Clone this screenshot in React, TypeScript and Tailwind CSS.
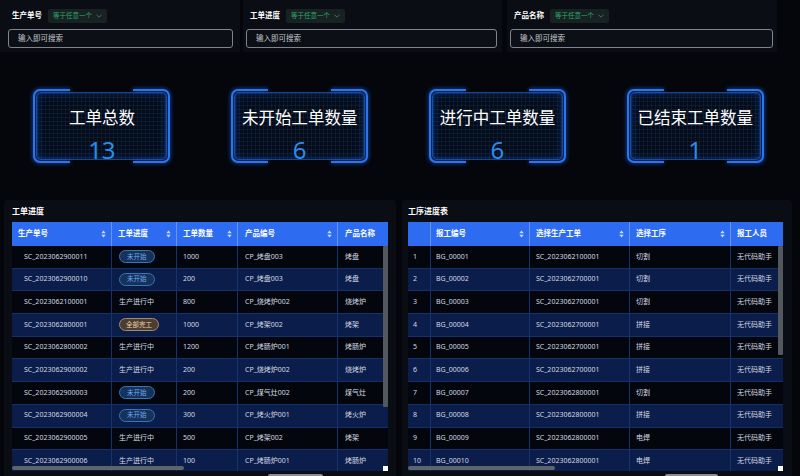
import React from 'react';

const FONT = "font-['Noto_Sans','Noto_Sans_CJK_SC',sans-serif]";

function SortIcon() {
  return (
    <svg width="5" height="8" viewBox="0 0 5 8" className="shrink-0">
      <polygon points="0.3,3.3 2.5,0.6 4.7,3.3" fill="#cfdcff" />
      <polygon points="0.3,4.7 2.5,7.4 4.7,4.7" fill="#cfdcff" />
    </svg>
  );
}

function FilterPanel({ label, cls }: { label: string; cls: string }) {
  return (
    <div className={`flex h-[52px] flex-col bg-[#0a0d13] pt-[9px] ${cls}`}>
      <div className="flex h-[14px] items-center">
        <span className="pl-[4px] text-[7.5px] font-bold leading-none text-white">{label}</span>
        <span className="ml-[6px] flex h-[14px] items-center gap-[4px] rounded-[2px] bg-[#182222] px-[5px] text-[6.5px] leading-none text-[#2aa86a]">
          等于任意一个
          <svg width="6" height="4" viewBox="0 0 6 4">
            <polyline points="0.5,0.8 3,3.2 5.5,0.8" fill="none" stroke="#5b7a6c" strokeWidth="0.8" />
          </svg>
        </span>
      </div>
      <div className="mt-[6px] flex h-[19px] items-center rounded-[3px] border border-[#80858d] bg-[#0c0f15] pl-[9px] text-[7.5px] text-[#c4c8ce]">
        输入即可搜索
      </div>
    </div>
  );
}

function StatCard({ title, value }: { title: string; value: string }) {
  return (
    <div className="relative h-[74px] w-[137px] p-[3px]">
      <div className="flex h-full flex-col items-center rounded-[5px] border border-[#1a4690] bg-[#040c1a] bg-[linear-gradient(rgba(70,130,210,0.1)_1px,transparent_1px),linear-gradient(90deg,rgba(70,130,210,0.1)_1px,transparent_1px)] bg-[length:4px_4px] pt-[15px] shadow-[inset_0_0_8px_rgba(30,100,230,0.35)]">
        <div className="text-[16.5px] leading-[20px] text-white">{title}</div>
        <div className="mt-[10px] text-[24px] font-normal leading-[24px] text-[#2a8de8]">{value}</div>
      </div>
      <div className="absolute bottom-0 left-0 top-0 w-[37px] rounded-l-[7px] border-y-2 border-l-2 border-[#2d74ee] drop-shadow-[0_0_2px_#1e6bff]" />
      <div className="absolute bottom-0 right-0 top-0 w-[37px] rounded-r-[7px] border-y-2 border-r-2 border-[#2d74ee] drop-shadow-[0_0_2px_#1e6bff]" />
    </div>
  );
}

type Col = { title: string; cls: string; sort: boolean; body: string };

function Badge({ text }: { text: string }) {
  if (text === '未开始') {
    return (
      <span className="flex h-[13px] items-center rounded-full border border-[#3a73b6] bg-[#15325a] px-[7px] text-[6.5px] leading-none text-[#6ea8ea]">
        未开始
      </span>
    );
  }
  if (text === '全部完工') {
    return (
      <span className="flex h-[13px] items-center rounded-full border border-[#a88b65] bg-[#4a3e33] px-[6px] text-[6.5px] leading-none text-[#ead1a6]">
        全部完工
      </span>
    );
  }
  return <span>{text}</span>;
}

function DataTable({
  cols,
  rows,
  widthCls,
  vThumbCls,
  hThumbCls,
}: {
  cols: Col[];
  rows: string[][];
  widthCls: string;
  vThumbCls: string;
  hThumbCls: string;
}) {
  return (
    <div className={`relative h-[249px] overflow-hidden ${widthCls}`}>
      <div className="flex h-[24px] bg-[#2d6cf0]">
        {cols.map((c, i) => (
          <div
            key={i}
            className={`flex shrink-0 items-center justify-between border-r border-[rgba(255,255,255,0.28)] pr-[5px] text-[7.5px] font-bold text-white ${c.cls}`}
          >
            <span>{c.title}</span>
            {c.sort && <SortIcon />}
          </div>
        ))}
      </div>
      <div className="flex flex-col">
        {rows.map((r, ri) => (
          <div
            key={ri}
            className={`flex h-[22.7px] shrink-0 border-b border-[#152f68] ${ri % 2 === 0 ? 'bg-[#03060c]' : 'bg-[#0b1d4a]'}`}
          >
            {r.map((v, ci) => (
              <div
                key={ci}
                className={`flex shrink-0 items-center border-r border-[#17336f] text-[7px] text-[#d3d9e3] ${cols[ci].cls} ${cols[ci].body}`}
              >
                <Badge text={v} />
              </div>
            ))}
          </div>
        ))}
      </div>
      <div className={`absolute top-[24px] w-[5px] rounded-[1px] bg-[#53575e] ${vThumbCls}`} />
      <div className={`absolute left-0 top-[244px] h-[4px] rounded-[2px] bg-[#5f636a] ${hThumbCls}`} />
    </div>
  );
}

const leftCols: Col[] = [
  { title: '生产单号', cls: 'w-[100px] pl-[6px]', sort: true, body: 'pl-[12px]' },
  { title: '工单进度', cls: 'w-[65px] pl-[6px]', sort: true, body: 'pl-[7px]' },
  { title: '工单数量', cls: 'w-[61px] pl-[6px]', sort: true, body: 'pl-[6px]' },
  { title: '产品编号', cls: 'w-[100px] pl-[7px]', sort: true, body: 'pl-[7px]' },
  { title: '产品名称', cls: 'w-[80px] pl-[7px]', sort: true, body: 'pl-[7px]' },
];

const leftRows = [
  ['SC_2023062900011', '未开始', '1000', 'CP_烤盘003', '烤盘'],
  ['SC_2023062900010', '未开始', '200', 'CP_烤盘003', '烤盘'],
  ['SC_2023062100001', '生产进行中', '800', 'CP_烧烤炉002', '烧烤炉'],
  ['SC_2023062800001', '全部完工', '1000', 'CP_烤架002', '烤架'],
  ['SC_2023062800002', '生产进行中', '1200', 'CP_烤肠炉001', '烤肠炉'],
  ['SC_2023062900002', '生产进行中', '200', 'CP_烧烤炉002', '烧烤炉'],
  ['SC_2023062900003', '未开始', '200', 'CP_煤气灶002', '煤气灶'],
  ['SC_2023062900004', '未开始', '300', 'CP_烤火炉001', '烤火炉'],
  ['SC_2023062900005', '生产进行中', '500', 'CP_烤架002', '烤架'],
  ['SC_2023062900006', '生产进行中', '100', 'CP_烤肠炉001', '烤肠炉'],
];

const rightCols: Col[] = [
  { title: '', cls: 'w-[23px] pl-[5px]', sort: false, body: 'pl-[5px]' },
  { title: '报工编号', cls: 'w-[99px] pl-[5px]', sort: true, body: 'pl-[5px]' },
  { title: '选择生产工单', cls: 'w-[100px] pl-[6px]', sort: true, body: 'pl-[6px]' },
  { title: '选择工序', cls: 'w-[101px] pl-[6px]', sort: true, body: 'pl-[6px]' },
  { title: '报工人员', cls: 'w-[80px] pl-[6px]', sort: true, body: 'pl-[6px]' },
];

const rightRows = [
  ['1', 'BG_00001', 'SC_2023062100001', '切割', '无代码助手'],
  ['2', 'BG_00002', 'SC_2023062700001', '切割', '无代码助手'],
  ['3', 'BG_00003', 'SC_2023062700001', '切割', '无代码助手'],
  ['4', 'BG_00004', 'SC_2023062700001', '拼接', '无代码助手'],
  ['5', 'BG_00005', 'SC_2023062700001', '拼接', '无代码助手'],
  ['6', 'BG_00006', 'SC_2023062700001', '拼接', '无代码助手'],
  ['7', 'BG_00007', 'SC_2023062800001', '切割', '无代码助手'],
  ['8', 'BG_00008', 'SC_2023062800001', '拼接', '无代码助手'],
  ['9', 'BG_00009', 'SC_2023062800001', '电焊', '无代码助手'],
  ['10', 'BG_00010', 'SC_2023062800001', '电焊', '无代码助手'],
];

export default function App() {
  return (
    <div className={`h-[476px] w-[800px] overflow-hidden bg-[#04060b] ${FONT}`}>
      <div className="flex">
        <FilterPanel label="生产单号" cls="w-[240px] pl-[8px] pr-[7px]" />
        <FilterPanel label="工单进度" cls="ml-[3px] w-[259px] pl-[3px] pr-[5px]" />
        <FilterPanel label="产品名称" cls="ml-[5px] w-[270px] pl-[3px] pr-[4px]" />
      </div>

      <div className="mt-[37px] grid grid-cols-4 justify-items-center pl-[3px] pr-[6px]">
        <StatCard title="工单总数" value="13" />
        <StatCard title="未开始工单数量" value="6" />
        <StatCard title="进行中工单数量" value="6" />
        <StatCard title="已结束工单数量" value="1" />
      </div>

      <div className="mt-[37px] flex">
        <div className="ml-[4px] h-[290px] w-[392px] rounded-[4px] bg-[#0a0d14] pl-[8px] pt-[6px]">
          <div className="mb-[6px] h-[10px] text-[8px] font-bold leading-[10px] text-white">工单进度</div>
          <div className="relative">
            <DataTable
              cols={leftCols}
              rows={leftRows}
              widthCls="w-[376px]"
              vThumbCls="left-[371px] h-[161px]"
              hThumbCls="w-[172px]"
            />
            <div className="absolute left-[371px] top-[244px] h-[5px] w-[5px] bg-white" />
          </div>
          <div className="ml-[256px] mt-[3px] h-[3px] w-[55px] rounded-t-[2px] bg-[#8a8d93]" />
        </div>
        <div className="ml-[6px] h-[290px] w-[390px] rounded-[4px] bg-[#0a0d14] pl-[6px] pt-[6px]">
          <div className="mb-[6px] h-[10px] text-[8px] font-bold leading-[10px] text-white">工序进度表</div>
          <div className="relative">
            <DataTable
              cols={rightCols}
              rows={rightRows}
              widthCls="w-[375px]"
              vThumbCls="left-[370px] h-[109px]"
              hThumbCls="w-[147px]"
            />
            <div className="absolute left-[370px] top-[244px] h-[5px] w-[5px] bg-white" />
          </div>
          <div className="ml-[257px] mt-[3px] h-[3px] w-[53px] rounded-t-[2px] bg-[#8a8d93]" />
        </div>
      </div>
    </div>
  );
}
